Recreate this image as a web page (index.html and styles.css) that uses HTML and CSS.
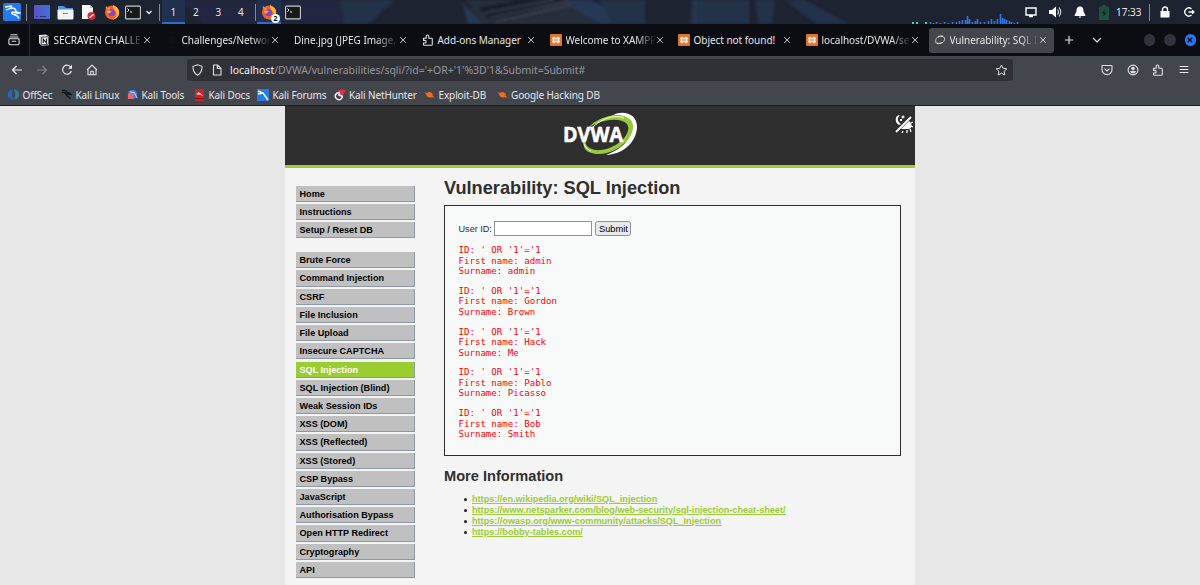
FILE: index.html
```
<!DOCTYPE html>
<html lang="en">
<head>
    <meta charset="UTF-8">
    <title>Vulnerability: SQL Injection</title>
    <link rel="stylesheet" href="styles.css">
</head>
<body>
    <!-- Shared icons -->
    <svg class="defs">
        <symbol id="close" viewBox="0 0 8 8"><path d="M1.2 1.2l5.6 5.6M6.8 1.2L1.2 6.8" fill="none" stroke="#d8d8dc" stroke-width=".9"/></symbol>
        <symbol id="xampp" viewBox="0 0 12 12"><rect width="12" height="12" rx="1" fill="#e0742a"/><path d="M4 3.200L6 5l2-1.800L9.300 4.500 8 6l1.300 1.500L8 8.800 6 7 4 8.800 2.700 7.500 4 6 2.700 4.500z" fill="none" stroke="#fff0e2" stroke-width="1.400" stroke-linejoin="round"/></symbol>
        <symbol id="puzzle" viewBox="0 0 12 12"><path d="M1.500 4.200h2.700V2.300a1.300 1.300 0 0 1 2.600 0v1.900h2.700a.8.8 0 0 1 .8.8v5.500a.8.8 0 0 1-.8.8H2.300a.8.8 0 0 1-.8-.8V9h1.400a1.300 1.300 0 0 0 0-2.600H1.500z" fill="none" stroke="#e0e0e4" stroke-width="1.100" stroke-linejoin="round"/></symbol>
        <symbol id="firefox" viewBox="0 0 16 16"><circle cx="8" cy="8.500" r="7" fill="#f4602c"/><path d="M9 1c4 1.500 7 5 6 9-1 4-4 5.500-7 5.500 3-1 5-3 4.500-6C12 6.500 9 6 9 1z" fill="#ffb52e"/><path d="M1.300 4l1.500-2 1 2 2.500-.5L5 6z" fill="#ff8a2a"/><circle cx="7.500" cy="8.700" r="3.500" fill="#8049c4"/><path d="M3 7c2-1 4 0 5 1-2-.3-2 2-4 1.500z" fill="#ffab36"/></symbol>
        <symbol id="terminal" viewBox="0 0 16 14"><rect x=".6" y=".6" width="14.800" height="12.800" rx="1" fill="#17191b" stroke="#c8cac9" stroke-width="1.100"/><path d="M2.500 3l1.500 1.500L2.500 6M5 6.500h2" fill="none" stroke="#fff" stroke-width="1"/></symbol>
        <symbol id="dragon" viewBox="0 0 12 12"><path d="M1 2c3-1 5 0 6 2 1.500 0 3 .5 4 2-2-1-4-1-5 0s2 2 3 3l1 2M1 4c2-.5 4 0 5 2" fill="none" stroke="currentColor" stroke-width="1.400"/></symbol>
        <symbol id="bug" viewBox="0 0 12 12"><path d="M.5 3.500l2.500.8C5 2.500 8 3 9.500 5.500L9.300 7l2.200 2.300L8.500 9C5 10 2.300 8 2.500 6z" fill="#f26a1b"/></symbol>
    </svg>

    <!-- Desktop panel -->
    <div class="panel">
        <svg class="wallpaper" width="1200" height="24" viewBox="0 0 1200 24">
            <defs><filter id="soft"><feGaussianBlur stdDeviation="1.5"/></filter></defs>
            <path d="M0 0h1200v24H0z" fill="#1e2331"/>
            <g filter="url(#soft)">
            <path d="M180 0h190l-10 24H205z" fill="#202840"/>
            <path d="M340 0h55l-26 24h-25z" fill="#22304a"/>
            <path d="M466 0h108l32 24H484z" fill="#262d3b"/>
            <path d="M462 2l22 22h-16zM560 0h30l56 24h-46z" fill="#263954"/>
            <path d="M478 8l42-8h48l-50 15-28 5z" fill="#181f2c"/>
            <path d="M484 13l70-13M490 18l78-17M495 22l76-17" stroke="#4b5360" fill="none"/>
            <path d="M600 0h45v24h-32zM692 0h56v24h-58zM755 0h20l-3 24h-14z" fill="#223249"/>
            <path d="M785 0h20l43 24h-31z" fill="#22334b"/>
            <path d="M748 0v24M695 0v24" stroke="#33455e" fill="none"/>
            </g>
        </svg>
        <div class="panel-left">
            <svg width="18" height="18" viewBox="0 0 18 18"><rect width="18" height="18" rx="2" fill="#2678ed"/><path d="M2 4l7-1M3 7l6-2c3 0 4 2 4 4l4 1c-3 1-5-1-7-1s-2 2 1 2.500 4 1.500 5 4M9 5L7 3" fill="none" stroke="#fff" stroke-width="1.300"/></svg>
            <i class="bar"></i>
            <svg width="16" height="14" viewBox="0 0 16 14"><defs><linearGradient id="g"><stop stop-color="#6151c8"/><stop offset="1" stop-color="#3b75d5"/></linearGradient></defs><rect width="16" height="14" rx="1" fill="url(#g)"/><path d="M2 11.500h2M6 11.500h6" stroke="#28366f"/></svg>
            <svg width="17" height="15" viewBox="0 0 17 15"><path d="M1 1h6l2 2h7v4H1z" fill="#4b93e9"/><rect x=".5" y="4.500" width="16" height="10" rx="1" fill="#f3f3f3"/><path d="M6 8.500h5" stroke="#888"/></svg>
            <svg width="15" height="17" viewBox="0 0 15 17"><path d="M1 1h8l3 3v11H1z" fill="#f7f7f7"/><path d="M9 1v3h3" fill="#c8c8c8"/><circle cx="10.500" cy="12" r="4" fill="#d62d35"/><path d="M8.500 13.500l4-3" stroke="#fff" stroke-width="1.200"/></svg>
            <svg width="16" height="16"><use href="#firefox"/></svg>
            <svg width="16" height="15"><use href="#terminal"/></svg>
            <svg width="6" height="5" viewBox="0 0 6 5"><path d="M.5 1L3 3.500 5.500 1" fill="none" stroke="#eee" stroke-width="1.300"/></svg>
            <i class="bar"></i>
        </div>
        <div class="workspaces">
            <b class="on">1</b><b>2</b><b>3</b><b>4</b>
        </div>
        <i class="bar"></i>
        <div class="task on"><svg width="16" height="16"><use href="#firefox"/></svg><em>2</em></div>
        <svg class="task-term" width="16" height="15"><use href="#terminal"/></svg>
        <svg class="graph" width="108" height="12" viewBox="0 0 108 12">
            <path d="M1 11h2M5 11h2M14 11h2" stroke="#2fe0b0" stroke-width="2"/>
            <path d="M19.500 12v-2M22.500 12v-1M25.500 12v-2M29.500 12v-1M33.500 12v-2M37.500 12v-1M41.500 12v-2M45.500 12v-2M48.500 12V9M51.500 12V8M54.500 12V8M56.500 12V4M58.500 12V7M61.500 12v-2M64.500 12V9M66.500 12V7M69.500 12v-2M73.500 12v-2M77.500 12V9M80.500 12V7M83.500 12V9M86.500 12V7M89.500 12V2M91.500 12V6M93.500 12V7M95.500 12V8M98.500 12V9M100.500 12v-2M103.500 12v-1M106.500 12v-2" stroke="#2c78ee" stroke-width="1.600"/>
        </svg>
        <div class="tray">
            <svg width="12" height="12" viewBox="0 0 12 12"><path d="M1 2h10v7H1zM4 10.500h4" fill="none" stroke="#fff" stroke-width="1.400"/></svg>
            <svg width="13" height="12" viewBox="0 0 13 12"><path d="M0 4h3l4-3.500v11L3 8H0z" fill="#fff"/><path d="M8.500 3.500q2 2.500 0 5M10 1.500q3.500 4.500 0 9" fill="none" stroke="#ddd" stroke-width="1.100"/></svg>
            <svg width="12" height="12" viewBox="0 0 12 12"><path d="M6 .5c3 0 3.500 2.500 3.500 5L11.300 9v1H.7V9l1.800-3.500C2.500 3 3 .5 6 .5zM4.500 10.500h3L6 12z" fill="#fff"/></svg>
            <svg width="12" height="15" viewBox="0 0 12 15"><path d="M4 0h4v1.500h3V15H1V1.500h3z" fill="#205044"/><path d="M7 4L3.500 8.500H6L5 12l3.500-4.500H6z" fill="#0d2220"/></svg>
            <span class="clock">17:33</span>
            <i class="bar"></i>
            <svg class="lock" width="10" height="12" viewBox="0 0 10 12"><path d="M2.500 5V3.500a2.500 2.500 0 0 1 5 0V5" fill="none" stroke="#fff" stroke-width="1.400"/><rect x=".5" y="5" width="9" height="6.500" rx=".6" fill="#fff"/></svg>
            <svg class="logout" width="11" height="10" viewBox="0 0 11 10"><path d="M7.500 2A4 4 0 1 0 7.500 8M4.500 5h5M8 3.200L10 5 8 6.800" fill="none" stroke="#fff" stroke-width="1.300"/></svg>
        </div>
    </div>

    <!-- Browser tabs -->
    <div class="tabs">
        <div class="view"><svg width="12" height="12" viewBox="0 0 12 12"><path d="M3 .8h6M2 3h8M1.800 4.700h8.400a.9.9 0 0 1 .9.9v4a1.200 1.200 0 0 1-1.200 1.200H2.100A1.200 1.200 0 0 1 .9 9.600v-4a.9.900 0 0 1 .9-.9zM4.200 7.200h3.600" fill="none" stroke="#e0e0e4" stroke-width="1.100" stroke-linecap="round"/></svg></div>
        <div class="tab"><svg width="12" height="12" viewBox="0 0 12 12"><path d="M1 1l7-.6L11 2.500v8.700l-7.500.5L1 9z" fill="#ddd"/><path d="M3.300 3.300l7-.5v7.500l-7 .5z" fill="#fff" stroke="#222" stroke-width=".8"/><path d="M5.200 9V5l3.200 4V4.600" fill="none" stroke="#111" stroke-width="1.100"/></svg><span>SECRAVEN CHALLE</span><svg class="x"><use href="#close"/></svg></div>
        <div class="tab"><svg width="12" height="12" viewBox="0 0 12 12"><circle cx="6" cy="6" r="4" fill="#101116"/></svg><span>Challenges/Networ</span><svg class="x"><use href="#close"/></svg></div>
        <div class="tab"><span>Dine.jpg (JPEG Image, </span><svg class="x"><use href="#close"/></svg></div>
        <div class="tab full"><svg width="12" height="12"><use href="#puzzle"/></svg><span>Add-ons Manager</span><svg class="x"><use href="#close"/></svg></div>
        <div class="tab"><svg width="12" height="12"><use href="#xampp"/></svg><span>Welcome to XAMPP</span><svg class="x"><use href="#close"/></svg></div>
        <div class="tab full"><svg width="12" height="12"><use href="#xampp"/></svg><span>Object not found!</span><svg class="x"><use href="#close"/></svg></div>
        <div class="tab"><svg width="12" height="12"><use href="#xampp"/></svg><span>localhost/DVWA/se</span><svg class="x"><use href="#close"/></svg></div>
        <div class="tab active"><svg width="12" height="12" viewBox="0 0 12 12"><path d="M9 2C5 1.500 2 3.500 1.500 6.500S5 10 8 8.500" fill="none" stroke="#91a878" stroke-width="1.300"/><path d="M4 3c4-1.500 7-.5 6.500 2.500S7 10 3 9.500" fill="none" stroke="#dde2d5"/></svg><span>Vulnerability: SQL I</span><svg class="x"><use href="#close"/></svg></div>
        <svg class="plus" width="10" height="10" viewBox="0 0 10 10"><path d="M5 .8v8.400M.8 5h8.400" stroke="#e8e8ea" stroke-width="1.100"/></svg>
        <svg class="down" width="10" height="6" viewBox="0 0 10 6"><path d="M1 1l4 4 4-4" fill="none" stroke="#e8e8ea" stroke-width="1.100"/></svg>
        <div class="window-buttons">
            <i></i><i></i><i class="quit"><svg width="6" height="6" viewBox="0 0 6 6"><path d="M.7.7l4.600 4.600M5.300.7L.7 5.300" stroke="#0b1526" stroke-width="1.400"/></svg></i>
        </div>
    </div>

    <!-- Address bar -->
    <div class="nav">
        <div class="nav-buttons">
            <svg width="12" height="12" viewBox="0 0 12 12"><path d="M11 6H1.500M5.500 2l-4 4 4 4" fill="none" stroke="#f0f0f2" stroke-width="1.200"/></svg>
            <svg width="12" height="12" viewBox="0 0 12 12"><path d="M1 6h9.500M6.500 2l4 4-4 4" fill="none" stroke="#85868c" stroke-width="1.200"/></svg>
            <svg width="12" height="12" viewBox="0 0 12 12"><path d="M10 3.500A4.500 4.500 0 1 0 10.400 7" fill="none" stroke="#e8e8ea" stroke-width="1.200"/><path d="M11 .8v4H7z" fill="#e8e8ea"/></svg>
            <svg width="12" height="12" viewBox="0 0 12 12"><path d="M1 6l5-4.800L11 6M2 5.500v5.200h8V5.500M4.700 10.500V7.200h2.600v3.300" fill="none" stroke="#e8e8ea" stroke-width="1.100" stroke-linejoin="round"/></svg>
        </div>
        <div class="url">
            <svg width="11" height="12" viewBox="0 0 11 12"><path d="M5.500.8L10 2.300c.2 4-.8 7-4.500 9C1.800 9.300.8 6.300 1 2.300z" fill="none" stroke="#dcdce0" stroke-width="1.100"/></svg>
            <svg width="10" height="12" viewBox="0 0 10 12"><path d="M1.500 1h4L9 4.300V11H1.500zM5.300 1v3.500H9" fill="none" stroke="#dcdce0" stroke-width="1.100" stroke-linejoin="round"/></svg>
            <span><b>localhost</b>/DVWA/vulnerabilities/sqli/?id='+OR+'1'%3D'1&amp;Submit=Submit#</span>
            <svg class="star" width="13" height="12" viewBox="0 0 13 12"><path d="M6.500 1l1.600 3.300 3.700.5-2.700 2.500.7 3.700-3.300-1.800L3.200 11l.7-3.700-2.700-2.500 3.700-.5z" fill="none" stroke="#e0e0e4" stroke-width="1" stroke-linejoin="round"/></svg>
        </div>
        <div class="nav-tools">
            <svg width="12" height="12" viewBox="0 0 12 12"><path d="M1.500 1.500h9a.5.500 0 0 1 .5.500v3.500a5 5 0 0 1-10 0V2a.5.500 0 0 1 .5-.5zM3.500 4.700L6 7l2.500-2.300" fill="none" stroke="#e0e0e4" stroke-width="1.100"/></svg>
            <svg width="12" height="12" viewBox="0 0 12 12"><circle cx="6" cy="6" r="4.900" fill="none" stroke="#e0e0e4" stroke-width="1.100"/><circle cx="6" cy="4.500" r="1.800" fill="#e0e0e4"/><path d="M3 7h6q-.5 2.500-3 2.500T3 7z" fill="#e0e0e4"/></svg>
            <svg width="12" height="12"><use href="#puzzle"/></svg>
            <svg width="12" height="12" viewBox="0 0 12 12"><path d="M1.700 2.500h8.600M1.700 5.500h8.600M1.700 8.500h8.600" stroke="#e8e8ea" stroke-width="1.100"/></svg>
        </div>
    </div>

    <!-- Bookmarks -->
    <div class="bookmarks">
        <a class="w1"><svg width="11" height="11" viewBox="0 0 12 12"><path d="M5 1a5 5 0 0 0 0 10C3 8 3 4 5 1z" fill="#2465c4" stroke="#2465c4"/><path d="M7 1a5 5 0 0 1 0 10c2-3 2-7 0-10z" fill="#387b9b" stroke="#387b9b"/></svg>OffSec</a>
        <a class="w2 dark"><svg width="11" height="11"><use href="#dragon"/></svg>Kali Linux</a>
        <a class="w3"><svg width="11" height="11" viewBox="0 0 12 12"><path d="M1 6a5 5 0 1 1 5 5z" fill="#3489f0"/><rect x="1" y="5" width="6" height="6" rx="1" fill="#eb6570"/><path d="M3 3l5 1 3 6" stroke="#d8e7fa" fill="none"/></svg>Kali Tools</a>
        <a class="w4"><svg width="11" height="12" viewBox="0 0 11 12"><path d="M1 0h9v12H1z" fill="#d51e26"/><path d="M2.500 5h4l2 1.500M4 3l2 2" stroke="#fff" fill="none"/><path d="M1 9.500h9" stroke="#751319"/></svg>Kali Docs</a>
        <a class="w5"><svg width="12" height="12" viewBox="0 0 12 12"><path d="M0 0h12v12H0z" fill="#267ae9"/><path d="M1 2l5 2 5 7M1 5l5-1" stroke="#fff" stroke-width="1.500" fill="none"/></svg>Kali Forums</a>
        <a class="w6"><svg width="12" height="12" viewBox="0 0 12 12"><path d="M4 1l6-.5 1.500 1L9 7l-4 1z" fill="#dd3048"/><path d="M6 4C1 3 0 8 3 10s6-1 5-3L4 5.500" fill="none" stroke="#fff" stroke-width="1.500"/></svg>Kali NetHunter</a>
        <a class="w7"><svg width="11" height="11"><use href="#bug"/></svg>Exploit-DB</a>
        <a><svg width="11" height="11"><use href="#bug"/></svg>Google Hacking DB</a>
    </div>

    <!-- DVWA page -->
    <div class="container">
        <div class="header">
            <svg class="logo" width="80" height="52" viewBox="0 0 80 52">
                <path d="M51 9C62 2 78 6 77 21 76 34 65 47 46 48 62 42 72 32 72 20 72 11 61 6 51 9z" fill="#fff"/>
                <path fill-rule="evenodd" d="M28 21C39 8 62 4 71 13 80 26 59 47 39 47 26 47 21 40 25 33 25 40 32 44 41 43 58 41 73 26 67 17 60 10 42 12 28 21z" fill="#98c93c"/>
                <path d="M33 20c-11 9-13 19-2 24M33 20C45 9 57 8 64 11" fill="none" stroke="#fff" stroke-width="1"/>
                <text x="3" y="34.500" textLength="60" lengthAdjust="spacingAndGlyphs">DVWA</text>
            </svg>
            <svg class="theme" width="20" height="20" viewBox="0 0 20 20"><path d="M6 1C1 1 0 8 5 11l2-1C3 7 3 4 6 1z" fill="#fff"/><path d="M9 1l.7 1.300L11 3l-1.300.7L9 5l-.7-1.300L7 3l1.300-.7zM6 5h2v2H6z" fill="#fff"/><path d="M2 18L17 3" stroke="#fff" stroke-width="1.800"/><path d="M7 15l8-8c4 3 3 8-1 8z" fill="#fff"/><path d="M9 17l-1 2M13 16v3M16 15l1 3M17 12l2 1M17 9l2-1" stroke="#fff" stroke-width="1.300"/></svg>
        </div>
        <div class="main">
            <div class="menu">
                <ul>
                    <li>Home</li>
                    <li>Instructions</li>
                    <li>Setup / Reset DB</li>
                </ul>
                <ul>
                    <li>Brute Force</li>
                    <li>Command Injection</li>
                    <li>CSRF</li>
                    <li>File Inclusion</li>
                    <li>File Upload</li>
                    <li>Insecure CAPTCHA</li>
                    <li class="selected">SQL Injection</li>
                    <li>SQL Injection (Blind)</li>
                    <li>Weak Session IDs</li>
                    <li>XSS (DOM)</li>
                    <li>XSS (Reflected)</li>
                    <li>XSS (Stored)</li>
                    <li>CSP Bypass</li>
                    <li>JavaScript</li>
                    <li>Authorisation Bypass</li>
                    <li>Open HTTP Redirect</li>
                    <li>Cryptography</li>
                    <li>API</li>
                </ul>
            </div>
            <div class="body">
                <h1>Vulnerability: SQL Injection</h1>
                <div class="vulnerable">
                    <form>
                        <label>User ID:</label>
                        <input type="text" name="id">
                        <button type="button">Submit</button>
                    </form>
<pre>ID: ' OR '1'='1
First name: admin
Surname: admin</pre>
<pre>ID: ' OR '1'='1
First name: Gordon
Surname: Brown</pre>
<pre>ID: ' OR '1'='1
First name: Hack
Surname: Me</pre>
<pre>ID: ' OR '1'='1
First name: Pablo
Surname: Picasso</pre>
<pre>ID: ' OR '1'='1
First name: Bob
Surname: Smith</pre>
                </div>
                <h2>More Information</h2>
                <ul class="links">
                    <li><a href="#">https://en.wikipedia.org/wiki/SQL_injection</a></li>
                    <li><a href="#">https://www.netsparker.com/blog/web-security/sql-injection-cheat-sheet/</a></li>
                    <li><a href="#">https://owasp.org/www-community/attacks/SQL_Injection</a></li>
                    <li><a href="#">https://bobby-tables.com/</a></li>
                </ul>
            </div>
        </div>
    </div>
</body>
</html>
```
FILE: styles.css
```
* {
    box-sizing: border-box;
    margin: 0;
    padding: 0;
}

body {
    width: 1200px;
    height: 585px;
    overflow: hidden;
    background: #e7e7e7;
    font-family: "Noto Sans", sans-serif;
    font-size: 10px;
    color: #e6e6e8;
}

svg {
    display: block;
    flex: none;
}

.defs {
    position: absolute;
    width: 0;
    height: 0;
}

i, em, b {
    font-style: normal;
    font-weight: normal;
}

/* Desktop panel */
.panel {
    position: relative;
    display: flex;
    align-items: center;
    height: 24px;
}

.panel > * {
    position: relative;
    flex: none;
}

.panel .wallpaper {
    position: absolute;
    left: 0;
    top: 0;
}

.bar {
    width: 1px;
    height: 17px;
    background: #878b94;
}

.panel-left {
    display: flex;
    align-items: center;
    gap: 7px;
    width: 162px;
    padding-left: 3px;
}

.panel-left svg:nth-of-type(1) { margin-right: -2px; }
.panel-left svg:nth-of-type(4) { margin-right: 1px; }
.panel-left svg:nth-of-type(6) { margin-left: -2px; }
.panel-left svg:nth-of-type(7) { margin-left: -2px; }

.workspaces {
    display: flex;
    width: 93px;
}

.workspaces b {
    width: 22.5px;
    height: 24px;
    line-height: 24px;
    text-align: center;
}

.on {
    background: #1f314f;
    border-bottom: 2px solid #2f6dcc;
}

.task {
    width: 24px;
    height: 24px;
    margin-left: 1px;
    padding: 4px;
}

.task em {
    position: absolute;
    right: 1px;
    bottom: -1px;
    width: 9px;
    height: 9px;
    border-radius: 50%;
    background: #fff;
    color: #111;
    font-size: 7.5px;
    font-weight: bold;
    line-height: 9px;
    text-align: center;
}

.task-term {
    margin-left: 4px;
}

.graph {
    align-self: flex-end;
    margin-left: 610px;
}

.tray {
    display: flex;
    align-items: center;
    gap: 12px;
    margin-left: 6px;
}

.tray .clock {
    margin: 0 -5px 0 -6px;
    font-size: 10px;
}

.tray .lock { margin-left: -2px; }
.tray .logout { margin-left: 2px; }

/* Browser */
.tabs {
    display: flex;
    align-items: center;
    height: 32px;
    background: #0c0d12;
}

.view {
    display: flex;
    align-items: center;
    width: 30px;
    height: 32px;
    padding-left: 8px;
    margin-right: 2.5px;
    border-right: 1px solid #292a30;
}

.tab {
    display: flex;
    flex: none;
    align-items: center;
    width: 125px;
    height: 25px;
    margin-right: 3px;
    padding: 0 7px 0 5.5px;
    border-radius: 3px;
}

.tab.active {
    background: #44464d;
}

.tab span {
    flex: 1;
    margin: 0 1px 0 3.5px;
    white-space: nowrap;
    letter-spacing: -.04px;
    mask-image: linear-gradient(to right, #000 78%, transparent);
}

.tab.full span {
    mask-image: none;
}

.tab span:first-child {
    margin-left: 0;
}

.tab .x {
    width: 8px;
    height: 8px;
    margin-left: -1px;
}

.plus { margin-left: 7px; }
.down { margin-left: 18px; }

.window-buttons {
    display: flex;
    gap: 9px;
    margin-left: 42px;
}

.window-buttons i {
    width: 11.5px;
    height: 11.5px;
    border-radius: 50%;
    background: #30333d;
}

.window-buttons .quit {
    display: flex;
    align-items: center;
    justify-content: center;
    background: #2e73f0;
}

.nav {
    display: flex;
    align-items: center;
    height: 28px;
    background: #44464d;
}

.nav-buttons {
    display: flex;
    gap: 13px;
    width: 187px;
    padding-left: 11px;
}

.url {
    display: flex;
    align-items: center;
    width: 826px;
    height: 22px;
    padding: 0 5px;
    gap: 9px;
    border-radius: 3px;
    background: #303136;
    color: #96979c;
    font-size: 10.5px;
    letter-spacing: -.02px;
}

.url span { margin-left: -1px; }
.url b { color: #f0f0f2; }
.url .star { margin-left: auto; }

.nav-tools {
    display: flex;
    gap: 13.5px;
    margin-left: 88px;
}

.bookmarks {
    display: flex;
    align-items: center;
    height: 22px;
    padding-left: 8px;
    background: #44464d;
    border-bottom: 1px solid #1c1d22;
    font-size: 10px;
    letter-spacing: -.12px;
}

.bookmarks a {
    display: flex;
    flex: none;
    align-items: center;
    gap: 3.5px;
    white-space: nowrap;
}

.bookmarks .dark svg { color: #111317; }
.w1 { width: 53px; }
.w2 { width: 66px; }
.w3 { width: 67px; }
.w4 { width: 63px; }
.w5 { width: 76.5px; }
.w6 { width: 90.5px; }
.w7 { width: 72.5px; }

/* DVWA page */
.container {
    width: 630px;
    height: 479px;
    margin-left: 285px;
    background: #f4f4f4;
    font-family: "Liberation Sans", Arial, sans-serif;
    font-size: 9.12px;
    color: #2f2f2f;
}

.header {
    position: relative;
    height: 61.5px;
    padding-top: 1px;
    background: #2f2f2f;
    border-bottom: 3px solid #a1cc33;
}

.logo {
    margin-left: 275px;
}

.logo text {
    font-family: "Open Sans", sans-serif;
    font-size: 22px;
    font-weight: bold;
    fill: #fff;
    stroke: #fff;
    stroke-width: .6px;
}

.theme {
    position: absolute;
    right: 1px;
    top: 8px;
}

.main {
    display: flex;
}

.menu {
    width: 119px;
    margin: 18px 29.5px 0 10.5px;
}

.menu ul {
    list-style: none;
}

.menu ul:first-child {
    margin-bottom: 14.2px;
}

.menu li {
    height: 16.2px;
    margin-bottom: 2.02px;
    padding-left: 4px;
    border-right: 1px solid #8d98a6;
    border-bottom: 1px solid #8d98a6;
    background: #c0c0c0;
    color: #000;
    font-weight: bold;
    line-height: 16.6px;
}

.menu .selected {
    background: #9acd32;
    color: #fff;
}

.body {
    width: 457px;
}

h1 {
    margin-top: 10px;
    font-size: 18.2px;
    line-height: 21px;
}

.vulnerable {
    height: 251.5px;
    margin-top: 6px;
    padding: 15px 13.5px;
    border: 1px solid #2f2f2f;
    background: #f8fafa;
}

form {
    display: flex;
    align-items: center;
    height: 16px;
    margin-bottom: 8.7px;
}

input {
    width: 98px;
    height: 15px;
    margin: 0 3px 0 2.5px;
    border: 1px solid #8f8f9d;
    background: #fff;
}

button {
    width: 36px;
    height: 15px;
    border: 1px solid #8f8f9d;
    border-radius: 2.5px;
    background: #e9e9ed;
    color: #000;
    font: 9.3px "Liberation Sans", Arial, sans-serif;
}

pre {
    margin-bottom: 9.1px;
    color: #f00;
    font-family: "DejaVu Sans Mono", monospace;
    font-size: 9.1px;
    line-height: 10.55px;
}

h2 {
    margin-top: 11px;
    font-size: 14.6px;
    line-height: 18px;
}

.links {
    margin-top: 8.5px;
    padding-left: 28px;
    list-style: none;
}

.links li {
    display: flex;
    align-items: center;
    line-height: 11px;
}

.links li::before {
    content: "";
    width: 3px;
    height: 3px;
    margin: 0 5px 0 -8px;
    border-radius: 50%;
    background: #222;
}

.links a {
    color: #9acd32;
    font-weight: bold;
}
```
